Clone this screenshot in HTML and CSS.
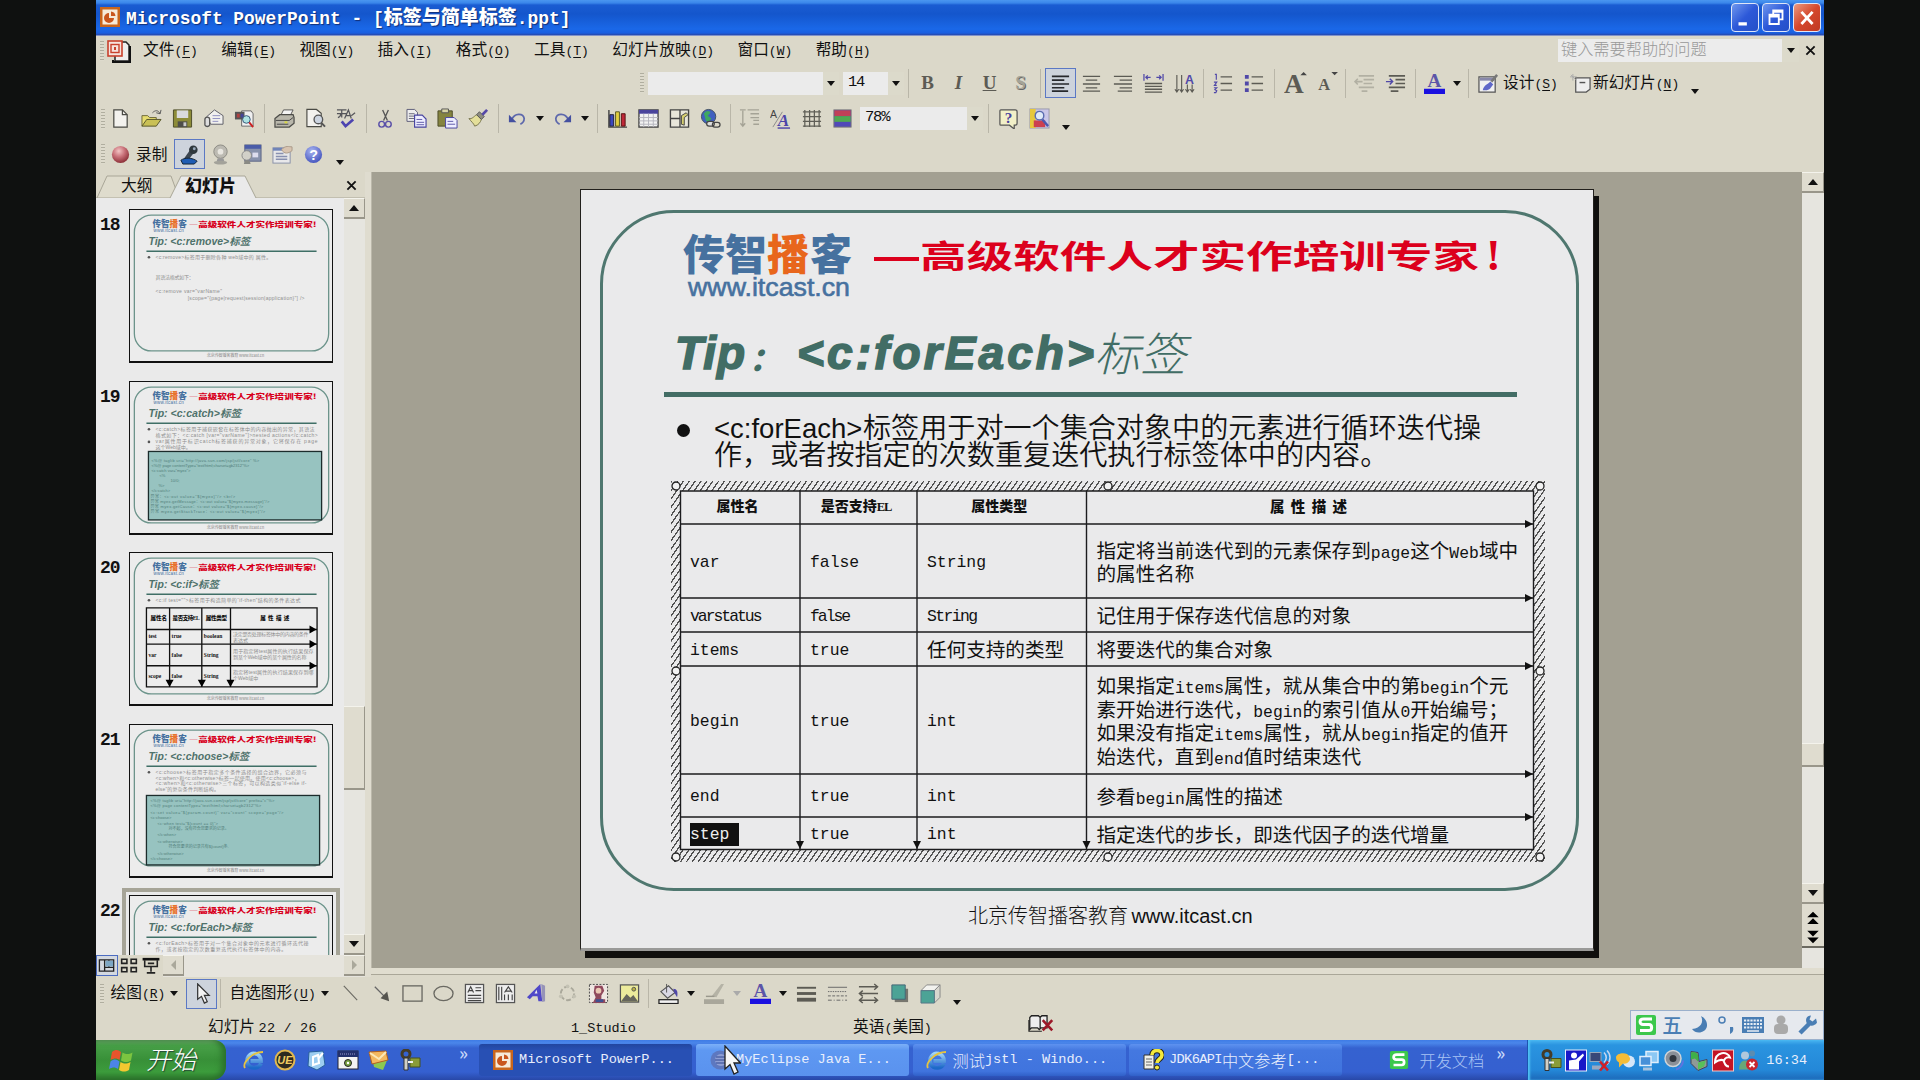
FILE: index.html
```html
<!DOCTYPE html>
<html lang="zh-CN">
<head>
<meta charset="utf-8">
<title>Microsoft PowerPoint - [标签与简单标签.ppt]</title>
<link rel="stylesheet" href="styles.css">
</head>
<body>
<svg class="defs" width="0" height="0">
  <defs>
    <linearGradient id="gBlue" x1="0" y1="0" x2="0" y2="1"><stop offset="0" stop-color="#9fd4f8"/><stop offset="1" stop-color="#1c68c8"/></linearGradient>
    <radialGradient id="gRed" cx=".4" cy=".3" r=".7"><stop offset="0" stop-color="#f3c4c4"/><stop offset=".5" stop-color="#c87078"/><stop offset="1" stop-color="#8c3038"/></radialGradient>
    <radialGradient id="gHelp" cx=".4" cy=".3" r=".7"><stop offset="0" stop-color="#a8b4f0"/><stop offset="1" stop-color="#4858c0"/></radialGradient>

    <symbol id="ppt" viewBox="0 0 22 22"><rect x="1" y="1" width="20" height="20" fill="#c9661c"/><rect x="3.5" y="3.5" width="15" height="15" fill="#f6ead8"/><path d="M10 7a5 5 0 1 0 5 5h-5z" fill="#c9561c"/><path d="M12 5.5a5 5 0 0 1 4.5 4.5H12z" fill="#c9561c"/></symbol>
    <symbol id="pptdoc" viewBox="0 0 24 24"><path d="M8 3h11l3 3v16H8z" fill="#eee" stroke="#222" stroke-width="1.5"/><path d="M6 21v2h17V7" fill="none" stroke="#111" stroke-width="2"/><rect x="1" y="2" width="14" height="15" fill="#f6e2dc" stroke="#c8402c" stroke-width="1.6"/><rect x="4" y="5.500" width="8" height="8" fill="none" stroke="#c8402c" stroke-width="1.4"/><path d="M7 8h2v3H7z" fill="#c8402c"/></symbol>
    <symbol id="new" viewBox="0 0 22 22"><path d="M4 2h9l5 5v13H4z" fill="#f3f2ee" stroke="#4a4a44" stroke-width="1.3"/><path d="M13 2v5h5" fill="none" stroke="#4a4a44" stroke-width="1.3"/></symbol>
    <symbol id="open" viewBox="0 0 22 22"><path d="M1 19V8h6l2 2h7v3" fill="#e6dc70" stroke="#6c6838"/><path d="M1 19l5-7h15l-5 7z" fill="#c9c055" stroke="#55552c"/><path d="M12 5c3-3 6-3 8 1m0 0l1-4m-1 4l-4-1" fill="none" stroke="#555"/></symbol>
    <symbol id="save" viewBox="0 0 22 22"><path d="M1.500 2h19v18h-19z" fill="#8d8c38" stroke="#4c4c28"/><path d="M5 2.500h12v8H5z" fill="#d9dadd"/><path d="M6 14h10v6H6z" fill="#4e4e4a"/><path d="M12 15h3v4h-3z" fill="#ccc"/></symbol>
    <symbol id="perm" viewBox="0 0 22 22"><path d="M4 9l8-7 9 6v9H8z" fill="#f1f0ee" stroke="#5c5c66"/><path d="M10 8h8M10 11h8M10 14h6" stroke="#9090c0"/><path d="M2 18v-6a2 2 0 0 1 5 0v6a3 3 0 0 1-5 0" fill="#ddd" stroke="#555" stroke-width="1.4"/></symbol>
    <symbol id="research" viewBox="0 0 22 22"><path d="M8 3h10l2 3v13H8z" fill="#f0f0f0" stroke="#666"/><path d="M1 4h10v8H1z" fill="#555"/><path d="M3 6h3v4H3z" fill="#b04040"/><path d="M7 6h3v4H7z" fill="#449"/><circle cx="13" cy="12" r="4" fill="#aee3e3" stroke="#357"/><path d="M16 15l4 5" stroke="#c22" stroke-width="2"/></symbol>
    <symbol id="print" viewBox="0 0 22 22"><path d="M7 8l3-6h10l-3 6" fill="#f4f4f4" stroke="#555"/><path d="M1 11l5-4h14l1 3v6l-5 4H1z" fill="#b9b7ab" stroke="#4c4c48" stroke-width="1.3"/><path d="M2 13h14l4-3M3 17h12" fill="none" stroke="#444"/><path d="M11 15h3" stroke="#d8d840" stroke-width="2"/></symbol>
    <symbol id="preview" viewBox="0 0 22 22"><path d="M2 1.500h10l5 4v14H2z" fill="#f3f2ee" stroke="#4a4a44" stroke-width="1.2"/><circle cx="14" cy="12" r="4.500" fill="#cdd5e0" stroke="#555" stroke-width="1.4"/><path d="M17 15.500l4 4" stroke="#555" stroke-width="2"/></symbol>
    <symbol id="spell" viewBox="0 0 22 22"><path d="M1 2h10M1 6h10M6 2v8M2 10c3-1 3-3 3-4M9 11l4-9 3 9M10.500 8h5M16 8l4-3" fill="none" stroke="#55555a" stroke-width="1.300"/><path d="M6 14l4 5 8-7" fill="none" stroke="#4c44b0" stroke-width="2.800"/></symbol>
    <symbol id="cut" viewBox="0 0 22 22"><path d="M8 2l5 11M14 2L9 13" stroke="#555" stroke-width="1.400"/><circle cx="7" cy="17" r="3" fill="none" stroke="#5a50a8" stroke-width="1.500"/><circle cx="14" cy="17" r="3" fill="none" stroke="#5a50a8" stroke-width="1.500"/></symbol>
    <symbol id="copy" viewBox="0 0 22 22"><path d="M1 1.500h8l3 3V14H1z" fill="#eee" stroke="#5c5c78"/><path d="M3 6h6M3 8.500h6M3 11h6" stroke="#667"/><path d="M9 7.500h8l4 4V20H9z" fill="#eef" stroke="#4844a0" stroke-width="1.200"/><path d="M11 12h6M11 15h8M11 17.500h8" stroke="#5c58a8"/></symbol>
    <symbol id="paste" viewBox="0 0 22 22"><path d="M1 3h15v16H1z" fill="#858440" stroke="#4c4c28"/><path d="M5 1h7v4H5z" fill="#d8d4a8" stroke="#555"/><path d="M9 10h9l3 3v8H9z" fill="#eef" stroke="#4844a0"/><path d="M11 14h6M11 17h8" stroke="#5c58a8"/></symbol>
    <symbol id="brush" viewBox="0 0 22 22"><path d="M1 11c3 1 5-2 8-4l5 5c-1 3-3 6-7 7-1-3-4-5-6-8z" fill="#e4df9a" stroke="#77744c"/><path d="M9 7l5 5 3-3-5-5z" fill="#8e8d80" stroke="#555"/><path d="M14 6l5-5 2 2-5 5z" fill="#5548a8"/></symbol>
    <symbol id="undo" viewBox="0 0 22 22"><path d="M5 12c3-7 12-7 13-1 0 3-2 5-4 6" fill="none" stroke="#5d68ac" stroke-width="1.800"/><path d="M2 7v8h8z" fill="#4450a0"/></symbol>
    <symbol id="redo" viewBox="0 0 22 22"><path d="M17 12C14 5 5 5 4 11c0 3 2 5 4 6" fill="none" stroke="#5d68ac" stroke-width="1.800"/><path d="M20 7v8h-8z" fill="#4450a0"/></symbol>
    <symbol id="chart" viewBox="0 0 22 22"><path d="M2 2v18h19" fill="none" stroke="#444" stroke-width="1.500"/><path d="M3 7h4v12H3z" fill="#3c48c0" stroke="#223"/><path d="M9 4h4v15H9z" fill="#e3d040" stroke="#552"/><path d="M15 6h4v13h-4z" fill="#c02838" stroke="#511"/></symbol>
    <symbol id="tbl" viewBox="0 0 22 22"><rect x="1" y="2" width="20" height="18" fill="#f2f2f2" stroke="#444" stroke-width="1.400"/><path d="M1 2h20v4H1z" fill="#4a449c"/><path d="M1 10h20M1 13.500h20M1 17h20M6 6v14M11 6v14M16 6v14" stroke="#b5b5bd"/></symbol>
    <symbol id="tbb" viewBox="0 0 22 22"><path d="M1.500 2h19v18h-19zM1.500 11h10M11.500 2v18" fill="#e8e6da" stroke="#444" stroke-width="1.400"/><path d="M13 17V8l5-3 2 2-4 3v8z" fill="#d6cf70" stroke="#444"/></symbol>
    <symbol id="link" viewBox="0 0 22 22"><circle cx="9" cy="9" r="7.500" fill="#4060c0" stroke="#405060"/><path d="M4 6c3-4 6-3 7-1l-3 3 4 3-3 4c-4-1-3-5-5-9z" fill="#3fa860"/><rect x="7" y="14" width="8" height="5" rx="2.500" fill="#ddd" stroke="#444" stroke-width="1.300"/><rect x="13" y="15" width="8" height="5" rx="2.500" fill="none" stroke="#444" stroke-width="1.300"/></symbol>
    <symbol id="expand" viewBox="0 0 22 22"><path d="M4 3v16M1.500 16L4 19l2.500-3M9 2h12M12 6h9M12 10h9M15 13h6M15 17h6M1 2h6" fill="none" stroke="#a5a396" stroke-width="1.400"/></symbol>
    <symbol id="showfmt" viewBox="0 0 22 22"><text x="0" y="10" font-family="Liberation Sans" font-size="11" fill="#444">A</text><path d="M3 20L13 4" stroke="#888"/><text x="8" y="19" font-family="Liberation Serif" font-size="18" font-weight="bold" font-style="italic" fill="#4c44a8">A</text><path d="M8 21h13" stroke="#4c44a8" stroke-width="1.500"/></symbol>
    <symbol id="grid" viewBox="0 0 22 22"><path d="M4 2v18M9 2v18M14 2v18M19 2v18M2 4h19M2 9h19M2 14h19M2 19h19" stroke="#5f5e56" stroke-width="1.300"/></symbol>
    <symbol id="color" viewBox="0 0 22 22"><rect x="2" y="2" width="18" height="18" fill="#5048b8" stroke="#777"/><path d="M2.500 2.500h17v6h-17z" fill="#c04058"/><path d="M2.500 8.500h17v6h-17z" fill="#50a850"/></symbol>
    <symbol id="ask" viewBox="0 0 22 22"><path d="M3 2h15a2 2 0 0 1 2 2v12a2 2 0 0 1-2 2h-1v4l-5-4H3a1 1 0 0 1-1-1V3a1 1 0 0 1 1-1z" fill="#f2f0c8" stroke="#555" stroke-width="1.300"/><text x="11" y="16" text-anchor="middle" font-family="Liberation Serif" font-size="16" font-weight="bold" fill="#473f9c">?</text></symbol>
    <symbol id="look" viewBox="0 0 22 22"><rect x="1" y="1" width="20" height="20" fill="#c9c6e8" stroke="#99a"/><path d="M1 1h6v20H1z" fill="#e6c83c"/><path d="M5 13h12v7H5z" fill="#cc4050"/><circle cx="11" cy="8" r="4.500" fill="#dfeaf8" stroke="#5a6cb0" stroke-width="1.500"/><path d="M14 12l6 7" stroke="#4c58b0" stroke-width="2.500"/></symbol>
    <symbol id="al" viewBox="0 0 22 22"><path d="M2 3.500h18M2 7.500h13M2 11.500h18M2 15.500h13M2 19h17" stroke="#26282c" stroke-width="1.700"/></symbol>
    <symbol id="ac" viewBox="0 0 22 22"><path d="M2 3.500h18M5 7.500h12M2 11.500h18M5 15.500h12M2 19h18" stroke="#5c5b54" stroke-width="1.400"/></symbol>
    <symbol id="ar" viewBox="0 0 22 22"><path d="M2 3.500h19M8 7.500h13M2 11.500h19M8 15.500h13M6 19h15" stroke="#5c5b54" stroke-width="1.400"/></symbol>
    <symbol id="dist" viewBox="0 0 22 22"><path d="M1 1v7M21 1v7M3 4.500h5M14 4.500h5M5 2.500L3 4.500l2 2M17 2.500l2 2-2 2" fill="none" stroke="#5048a8" stroke-width="1.300"/><path d="M2 11h18M2 14h18M2 17h18M2 20h18" stroke="#5c5b54" stroke-width="1.500"/></symbol>
    <symbol id="vert" viewBox="0 0 22 22"><path d="M3 2v18M8 2v18M14 12v8M19 12v8M1 17l2 3 2-3M6 17l2 3 2-3M12 17l2 3 2-3M17 17l2 3 2-3" fill="none" stroke="#5c5b54" stroke-width="1.200"/><text x="11.500" y="11" font-family="Liberation Sans" font-size="13" font-weight="bold" fill="#5048a8">A</text></symbol>
    <symbol id="num" viewBox="0 0 22 22"><path d="M9 4h12M9 11h12M9 18h12" stroke="#5c5b54" stroke-width="1.400"/><path d="M3 1.500h1.500V7M2 9.500h3L2.500 13H5M2 15.500h3l-2 2 2 1-1 2H2" fill="none" stroke="#5048a8" stroke-width="1.200"/></symbol>
    <symbol id="bul" viewBox="0 0 22 22"><path d="M9 4h12M9 11h12M9 18h12" stroke="#5c5b54" stroke-width="1.400"/><path d="M2 2h4v4H2zM2 9h4v4H2zM2 16h4v4H2z" fill="#5048a8"/></symbol>
    <symbol id="grow" viewBox="0 0 22 22"><text x="0" y="20" font-family="Liberation Serif" font-size="25" font-weight="bold" fill="#5c5b54">A</text><path d="M15 4l3-3 3 3z" fill="#444"/></symbol>
    <symbol id="shrink" viewBox="0 0 22 22"><text x="3" y="17" font-family="Liberation Serif" font-size="15" font-weight="bold" fill="#5c5b54">A</text><path d="M15 1h6l-3 3z" fill="#444"/></symbol>
    <symbol id="out" viewBox="0 0 22 22"><path d="M5 3h16M10 7h11M10 11h9M5 15h16M8 19h6M1 9h8M4 6L1 9l3 3" fill="none" stroke="#b2b0a3" stroke-width="1.700"/></symbol>
    <symbol id="ind" viewBox="0 0 22 22"><path d="M4 3h17M11 7h10M11 11h10M4 15h17M6 19h8" stroke="#5c5b54" stroke-width="1.800"/><path d="M1 9h7M5 6l3 3-3 3" fill="none" stroke="#5048a8" stroke-width="1.500"/></symbol>
    <symbol id="fcol" viewBox="0 0 22 22"><text x="11" y="15" text-anchor="middle" font-family="Liberation Serif" font-size="20" font-weight="bold" fill="#5c55a8">A</text><path d="M0 16.500h22V22H0z" fill="#1a10e0"/></symbol>
    <symbol id="design" viewBox="0 0 22 22"><path d="M1 4h17v16H1z" fill="#f1f1f1" stroke="#555" stroke-width="1.300"/><path d="M2 5h15v3H2z" fill="#88a"/><path d="M5 18c1-5 5-6 8-9l3 3c-3 3-3 7-11 6z" fill="#6068c8"/><path d="M13 8l6-7 2 2-6 7z" fill="#777"/></symbol>
    <symbol id="newslide" viewBox="0 0 22 22"><path d="M6 5h15v12l-4 3H6z" fill="#eee" stroke="#555" stroke-width="1.300"/><path d="M10 10h6" stroke="#555" stroke-width="1.500"/><path d="M3 1v7M0 4h7M1 2l5 5" stroke="#aaa"/></symbol>
    <symbol id="recdot" viewBox="0 0 22 22"><circle cx="11" cy="11" r="9" fill="url(#gRed)"/></symbol>
    <symbol id="mic" viewBox="0 0 22 22"><path d="M4 17l7-10 4 3-7 9z" fill="#3c4650"/><circle cx="15" cy="6" r="4.500" fill="#2f383e"/><circle cx="16" cy="5" r="1.500" fill="#9ab"/><path d="M2 17c4-3 12-3 17 1l-3 3H4z" fill="#1e5cb4" stroke="#123"/></symbol>
    <symbol id="cam" viewBox="0 0 22 22"><circle cx="11" cy="8" r="7" fill="#bcbab2" stroke="#8a8982"/><circle cx="11" cy="8" r="3" fill="#e8e6e0"/><path d="M8 15h6l1 3H7z" fill="#999"/><ellipse cx="11" cy="19.500" rx="7" ry="2" fill="#a3a29a"/></symbol>
    <symbol id="camwin" viewBox="0 0 22 22"><rect x="4" y="1" width="17" height="17" fill="#8892ac" stroke="#5c6484"/><path d="M4 1h17v4H4z" fill="#4a5ca8"/><circle cx="6" cy="12" r="5" fill="#d2d0c8" stroke="#888"/><path d="M4 17h5l1 4H3z" fill="#8a8a84"/><path d="M12 9h6v5h-6z" fill="#dde"/></symbol>
    <symbol id="opts" viewBox="0 0 22 22"><rect x="1" y="4" width="18" height="16" fill="#e8e8ea" stroke="#8890a8"/><path d="M1 4h10v3H1z" fill="#7084b8"/><path d="M4 10h8M4 13h12M4 16h12" stroke="#8890b0" stroke-width="1.500"/><path d="M10 6c4-5 8-3 11-3v4c-4 3-8 4-11-1z" fill="#d8c4b0" stroke="#a98"/></symbol>
    <symbol id="help" viewBox="0 0 22 22"><circle cx="11" cy="11" r="9" fill="url(#gHelp)"/><text x="11" y="16.500" text-anchor="middle" font-family="Liberation Sans" font-size="15" font-weight="bold" fill="#fff">?</text></symbol>
    <symbol id="ptr" viewBox="0 0 22 22"><path d="M7 1v16l4-3 3 7 3-1.500-3-6.500h5z" fill="#f3f3f3" stroke="#333" stroke-width="1.300"/></symbol>
    <symbol id="ln" viewBox="0 0 22 22"><path d="M4 3l14 15" stroke="#6a6962" stroke-width="1.200"/></symbol>
    <symbol id="arw" viewBox="0 0 22 22"><path d="M4 4l10 10" stroke="#666" stroke-width="1.400"/><path d="M19 19l-2-10-7 7z" fill="#55544e"/></symbol>
    <symbol id="rect" viewBox="0 0 22 22"><rect x="1" y="3" width="20" height="16" fill="none" stroke="#6a6962" stroke-width="1.400"/></symbol>
    <symbol id="oval" viewBox="0 0 22 22"><ellipse cx="11" cy="11" rx="10" ry="7.500" fill="none" stroke="#6a6962" stroke-width="1.400"/></symbol>
    <symbol id="tbox" viewBox="0 0 22 22"><rect x="1.500" y="1.500" width="19" height="19" fill="#eee" stroke="#555" stroke-width="1.300"/><path d="M4 10l3-6 3 6M5 8h4M12 5h6M12 8h6M4 13h14M4 16h14M4 18.500h14" fill="none" stroke="#444" stroke-width="1.200"/></symbol>
    <symbol id="vtbox" viewBox="0 0 22 22"><rect x="1.500" y="1.500" width="19" height="19" fill="#eee" stroke="#555" stroke-width="1.300"/><path d="M4 4v14M7 4v14M10 12v6M14 12v6M18 12v6M10 10l4-6 4 6M11 8.500h6" fill="none" stroke="#444" stroke-width="1.200"/></symbol>
    <symbol id="wart" viewBox="0 0 22 22"><path d="M1 15L15 1l2 18h-4l-1-5H7l-3 3z" fill="#5048c8"/><path d="M9 11h3l-1-4z" fill="#eee"/><path d="M16 1l4 2v16l-3 1z" fill="#9693b8"/></symbol>
    <symbol id="diag" viewBox="0 0 22 22"><circle cx="11" cy="11" r="7" fill="none" stroke="#aaa89b" stroke-width="2" stroke-dasharray="5 2.300"/><circle cx="11" cy="3.500" r="2" fill="#c4c2b4"/><circle cx="4" cy="14" r="2" fill="#c4c2b4"/><circle cx="18" cy="14" r="2" fill="#c4c2b4"/></symbol>
    <symbol id="clip" viewBox="0 0 22 22"><rect x="1.500" y="1.500" width="19" height="19" fill="#efe6e2" stroke="#444" stroke-dasharray="2 1.500"/><path d="M7 3h8l2 5-3 5v4h4v4H5l3-6-2-5z" fill="#90485c"/><circle cx="11" cy="8" r="3" fill="#ebc8b4"/><path d="M8 17h8v3H8z" fill="#405090"/></symbol>
    <symbol id="pic" viewBox="0 0 22 22"><rect x="1.500" y="2" width="19" height="18" fill="#eceb9c" stroke="#555" stroke-width="1.300"/><path d="M2 19.500l6-8 4 4 3-3 5 7z" fill="#66665c"/><circle cx="15.500" cy="6.500" r="2" fill="#b8b040" stroke="#555"/></symbol>
    <symbol id="fill" viewBox="0 0 22 22"><path d="M3 9l8-6 7 7-8 6z" fill="#dad9e4" stroke="#555" stroke-width="1.200"/><path d="M9 1v9" stroke="#555"/><path d="M16 6c4 0 5 3 4 9l-3-5z" fill="#5048a8"/><rect x="1" y="17.500" width="20" height="4" fill="#f2f2f2" stroke="#222" stroke-width="1.300"/></symbol>
    <symbol id="pen" viewBox="0 0 22 22"><path d="M8 14L18 1h3l-8 14z" fill="#b5b3a6"/><path d="M2 14h9" stroke="#9a988c" stroke-width="1.500"/><path d="M0 17h21v5H0z" fill="#a9a79b"/></symbol>
    <symbol id="lw" viewBox="0 0 22 22"><path d="M1 5h20" stroke="#5c5b54" stroke-width="2"/><path d="M1 11h20" stroke="#5c5b54" stroke-width="3"/><path d="M1 17.500h20" stroke="#5c5b54" stroke-width="4"/></symbol>
    <symbol id="dash" viewBox="0 0 22 22"><path d="M1 4.500h20" stroke="#666"/><path d="M1 9h20" stroke="#666" stroke-dasharray="1.500 1"/><path d="M1 13.500h20" stroke="#666" stroke-dasharray="3 1.500"/><path d="M1 18h20" stroke="#666" stroke-dasharray="4 2 1 2"/></symbol>
    <symbol id="arst" viewBox="0 0 22 22"><path d="M1 4h19M2 11h19M1 18h19M17 1l3.500 3-3.500 3M5 8l-3.500 3L5 14M17 15l3.500 3-3.500 3M5 15l-3.500 3L5 21" fill="none" stroke="#5c5b54" stroke-width="1.500"/></symbol>
    <symbol id="shad" viewBox="0 0 22 22"><path d="M6 6h14v14H6z" fill="#77766e"/><path d="M3 2h14v15H3z" fill="#4ca396" stroke="#467"/></symbol>
    <symbol id="threed" viewBox="0 0 22 22"><path d="M1 8l6-6h14l-6 6z" fill="#f2f2ee" stroke="#888"/><path d="M15 8l6-6v13l-6 6z" fill="#d8d7cf" stroke="#888"/><path d="M1 8h14v13H1z" fill="#4ca396" stroke="#578"/></symbol>
    <symbol id="ie" viewBox="0 0 22 22"><path d="M18 14.500c-2 5-10 6-13 1-3-6 2-12 7-11 4 .6 6 4 6 7.500H7.500" fill="none" stroke="url(#gBlue)" stroke-width="3.800"/><path d="M2 19C-1 14 9 3 20 3" fill="none" stroke="#e6c440" stroke-width="1.800"/></symbol>
    <symbol id="ue" viewBox="0 0 22 22"><circle cx="11" cy="11" r="9.500" fill="#2c2a20" stroke="#e0b850" stroke-width="2"/><text x="11" y="15" text-anchor="middle" font-family="Liberation Sans" font-size="11" font-weight="bold" font-style="italic" fill="#f0cc60">UE</text></symbol>
    <symbol id="note" viewBox="0 0 22 22"><path d="M4 3l14-1 2 14-8 5-9-4z" fill="#9ccdf0" stroke="#28609c"/><path d="M8 8l5-2 1 8-6 2zM13 10l5-6" stroke="#fff" stroke-width="2" fill="none"/></symbol>
    <symbol id="cmd" viewBox="0 0 22 22"><rect x="1" y="2" width="20" height="18" fill="#f3f3f3" stroke="#223"/><path d="M1 2h20v6H1z" fill="#22306c"/><path d="M3 5h16" stroke="#99c" stroke-dasharray="1 1"/><circle cx="11" cy="14" r="3.500" fill="#78a040" stroke="#222"/><circle cx="11" cy="14" r="1.200" fill="#fff"/></symbol>
    <symbol id="mailq" viewBox="0 0 22 22"><path d="M4 7l16 2-5 12-9-3z" fill="#8cc850"/><path d="M1 3l17-1 2 9-16 4z" fill="#f3b860" stroke="#b06020"/><path d="M2 4l9 6 7-7" fill="none" stroke="#fbe8b8" stroke-width="2"/></symbol>
    <symbol id="key" viewBox="0 0 22 22"><circle cx="7" cy="5" r="4" fill="none" stroke="#443c28" stroke-width="3"/><path d="M5 9h4v12H5z" fill="#d0d0c8" stroke="#333"/><path d="M11 9h10v9H11z" fill="#8a9c38" stroke="#46501c"/><path d="M9 13h5" stroke="#eee" stroke-width="2"/></symbol>
    <symbol id="ecl" viewBox="0 0 22 22"><circle cx="11" cy="11" r="9.500" fill="#5d78c0"/><circle cx="12" cy="11" r="6" fill="#8f9fd4"/><path d="M6 11h12M7 8h10M7 14h10" stroke="#5066a8" stroke-width="1.500"/></symbol>
    <symbol id="chm" viewBox="0 0 22 22"><path d="M2 6h10v14H2z" fill="#f0f0e8" stroke="#333"/><path d="M4 10h6M4 13h6M4 16h6" stroke="#666"/><path d="M10 6c0-6 10-6 10 0 0 4-5 4-5 8" fill="none" stroke="#222" stroke-width="5.500"/><path d="M10 6c0-6 10-6 10 0 0 4-5 4-5 8" fill="none" stroke="#f4e93c" stroke-width="3.600"/><circle cx="15" cy="18.500" r="2.500" fill="#f4e93c" stroke="#222"/></symbol>
    <symbol id="sogou" viewBox="0 0 22 22"><rect x="1" y="1" width="20" height="20" rx="2" fill="#3cc84c"/><path d="M17 5H8.500C4 5 4 10.500 8 10.500h6c3.500 0 3.500 6 0 6H5" fill="none" stroke="#fff" stroke-width="3"/></symbol>
    <symbol id="person" viewBox="0 0 22 22"><rect width="22" height="22" fill="#e8eefc"/><rect x="1" y="1" width="20" height="20" fill="#1818c8"/><circle cx="9" cy="6" r="3" fill="#fff"/><path d="M4 20V11l7-1 7-6 1 2-5 6v8z" fill="#fff"/></symbol>
    <symbol id="netx" viewBox="0 0 22 22"><rect x="1" y="3" width="11" height="9" fill="#384878" stroke="#9ab"/><path d="M3 16h9v4H3z" fill="#98a8c0"/><path d="M15 3c3 3 3 7 0 10M18 1c4 4 4 10 0 14" fill="none" stroke="#c8d8f0" stroke-width="1.500"/><path d="M11 12l8 9M19 12l-8 9" stroke="#d02028" stroke-width="2.600"/></symbol>
    <symbol id="cloud" viewBox="0 0 22 22"><circle cx="15" cy="12" r="6" fill="#d4e6f8"/><path d="M2 8c0-5 12-6 13-1 3 3-1 8-6 7l-4 4v-5c-2-1-3-3-3-5z" fill="#f5bd38"/></symbol>
    <symbol id="pcs" viewBox="0 0 22 22"><rect x="8" y="2" width="12" height="11" fill="#8cc8f4" stroke="#e0eefc" stroke-width="1.500"/><rect x="2" y="7" width="11" height="9" fill="#4890d8" stroke="#e0eefc" stroke-width="1.500"/><path d="M5 18h9v3H5z" fill="#a9c3de"/></symbol>
    <symbol id="spk" viewBox="0 0 22 22"><circle cx="10" cy="9" r="8" fill="#8a9098" stroke="#d0d4d8" stroke-width="1.500"/><circle cx="10" cy="9" r="3.500" fill="#30363e"/><path d="M13 20c4-1 7-5 7-9" fill="none" stroke="#5c74e0" stroke-width="2"/></symbol>
    <symbol id="safe" viewBox="0 0 22 22"><path d="M3 2l7 1 1 9 8-2v7l-9 4-7-7z" fill="#8f9a98" stroke="#445"/><path d="M3 3c5-2 9 2 7 9l-3-3-4 1z" fill="#40b048"/><path d="M10 13l8-2-2 6-6 3z" fill="#58c058"/></symbol>
    <symbol id="avira" viewBox="0 0 22 22"><rect x=".5" y=".5" width="21" height="21" fill="#c41424" stroke="#eac8cc"/><path d="M3 13C3 2 16 1 18 8c-4-1-5 1-6 3-2-1-5-1-9 2zM11 10c2 4 2 7 6 7" fill="none" stroke="#fff" stroke-width="2"/></symbol>
    <symbol id="msn" viewBox="0 0 22 22"><circle cx="8" cy="6" r="4" fill="#b0c8dc"/><path d="M2 20c0-12 12-12 12 0z" fill="#68a878"/><circle cx="15" cy="4" r="3" fill="#5c8cb0"/><circle cx="15" cy="15" r="6" fill="#c82830"/><path d="M12.500 12.500l5 5M17.500 12.500l-5 5" stroke="#fff" stroke-width="1.800"/></symbol>
    <symbol id="book" viewBox="0 0 30 22"><path d="M2 4l2-2h8l2 2 2-2h6v14h-7l-2 2-2-2H4l-2 2zM14 4v13" fill="#eee" stroke="#222" stroke-width="1.500"/><path d="M1 7v13h15" fill="none" stroke="#222" stroke-width="1.300"/><path d="M17 7l11 12M28 7L17 19" stroke="#9c1828" stroke-width="3"/></symbol>

    <symbol id="thumbhead" viewBox="0 0 200 150">
      <rect x="4" y="5" width="193" height="135" rx="17" fill="none" stroke="#6c948b" stroke-width="1.300"/>
      <g font-family="Noto Sans CJK SC" font-weight="900" font-size="8.500" fill="#46719f">
        <text x="22" y="17">传智</text><text x="39" y="17" fill="#e8722c">播</text><text x="47.500" y="17">客</text>
      </g>
      <text x="23" y="22" font-family="Liberation Sans" font-size="4.500" fill="#46719f" textLength="30">www.itcast.cn</text>
      <text x="58" y="17" font-family="Noto Sans CJK SC" font-weight="900" font-size="7" fill="#d8001c" textLength="127" lengthAdjust="spacingAndGlyphs">—高级软件人才实作培训专家!</text>
      <path d="M16 41h169" stroke="#3f6f66" stroke-width="1.300"/>
      <text x="76" y="146" font-family="Noto Sans CJK SC" font-size="4" fill="#888" textLength="57">北京传智播客教育 www.itcast.cn</text>
    </symbol>
  </defs>
</svg>

<main class="app">
  <header class="titlebar">
    <svg class="ticon"><use href="#ppt"/></svg>
    <h1 class="wintitle"><span>Microsoft PowerPoint - [</span><b>标签与简单标签</b><span>.ppt]</span></h1>
    <div class="winbtns">
      <svg class="wb" viewBox="0 0 28 28"><path d="M7 19h9v3.500H7z" fill="#fff"/></svg>
      <svg class="wb" viewBox="0 0 28 28"><path d="M11 11V6.500h10V16h-3M7 11h10v10H7zM7 13h10M11 8h10" fill="none" stroke="#fff" stroke-width="2"/></svg>
      <svg class="wb close" viewBox="0 0 28 28"><path d="M8 8l12 13M20 8L8 21" stroke="#fff" stroke-width="3"/></svg>
    </div>
  </header>

  <nav class="menubar">
    <i class="grip"></i>
    <svg class="docicon"><use href="#pptdoc"/></svg>
    <span class="menu">文件<s>(<u>F</u>)</s></span><span class="menu">编辑<s>(<u>E</u>)</s></span><span class="menu">视图<s>(<u>V</u>)</s></span><span class="menu">插入<s>(<u>I</u>)</s></span><span class="menu">格式<s>(<u>O</u>)</s></span><span class="menu">工具<s>(<u>T</u>)</s></span><span class="menu">幻灯片放映<s>(<u>D</u>)</s></span><span class="menu">窗口<s>(<u>W</u>)</s></span><span class="menu">帮助<s>(<u>H</u>)</s></span>
    <div class="ask">键入需要帮助的问题<i class="dd"></i></div>
    <svg class="mx" viewBox="0 0 12 12"><path d="M1.500 1.500l9 9M10.500 1.500l-9 9" stroke="#111" stroke-width="2"/></svg>
  </nav>

  <div class="bar fmt">
    <i class="grip"></i>
    <div class="combo fontname"><i class="dd"></i></div>
    <div class="combo fontsize">14<i class="dd"></i></div>
    <i class="sep"></i>
    <span class="ch b">B</span><span class="ch it">I</span><span class="ch un">U</span><span class="ch sh">S</span>
    <i class="sep w9"></i>
    <span class="ic on"><svg><use href="#al"/></svg></span><span class="ic"><svg><use href="#ac"/></svg></span><span class="ic"><svg><use href="#ar"/></svg></span><span class="ic"><svg><use href="#dist"/></svg></span><span class="ic"><svg><use href="#vert"/></svg></span>
    <i class="sep w7"></i>
    <span class="ic"><svg><use href="#num"/></svg></span><span class="ic"><svg><use href="#bul"/></svg></span>
    <i class="sep w10"></i>
    <span class="ic big"><svg><use href="#grow"/></svg></span><span class="ic big"><svg><use href="#shrink"/></svg></span>
    <i class="sep"></i>
    <span class="ic"><svg><use href="#out"/></svg></span><span class="ic"><svg><use href="#ind"/></svg></span>
    <i class="sep"></i>
    <span class="ic"><svg><use href="#fcol"/></svg></span><i class="dd"></i>
    <i class="sep w10"></i>
    <span class="ic"><svg><use href="#design"/></svg></span><span class="lbl design">设计<s>(<u>S</u>)</s></span>
    <span class="ic ns"><svg><use href="#newslide"/></svg></span><span class="lbl">新幻灯片<s>(<u>N</u>)</s></span><i class="dd low"></i>
  </div>

  <div class="bar std">
    <i class="grip"></i>
    <span class="ic"><svg><use href="#new"/></svg></span><span class="ic"><svg><use href="#open"/></svg></span><span class="ic"><svg><use href="#save"/></svg></span><span class="ic"><svg><use href="#perm"/></svg></span><span class="ic"><svg><use href="#research"/></svg></span>
    <i class="sep w9"></i>
    <span class="ic"><svg><use href="#print"/></svg></span><span class="ic"><svg><use href="#preview"/></svg></span><span class="ic"><svg><use href="#spell"/></svg></span>
    <i class="sep"></i>
    <span class="ic"><svg><use href="#cut"/></svg></span><span class="ic"><svg><use href="#copy"/></svg></span><span class="ic"><svg><use href="#paste"/></svg></span><span class="ic"><svg><use href="#brush"/></svg></span>
    <i class="sep"></i>
    <span class="ic"><svg><use href="#undo"/></svg></span><i class="dd w14"></i><span class="ic"><svg><use href="#redo"/></svg></span><i class="dd w14"></i>
    <i class="sep w10"></i>
    <span class="ic"><svg><use href="#chart"/></svg></span><span class="ic"><svg><use href="#tbl"/></svg></span><span class="ic"><svg><use href="#tbb"/></svg></span><span class="ic"><svg><use href="#link"/></svg></span>
    <i class="sep"></i>
    <span class="ic"><svg><use href="#expand"/></svg></span><span class="ic"><svg><use href="#showfmt"/></svg></span><span class="ic"><svg><use href="#grid"/></svg></span><span class="ic"><svg><use href="#color"/></svg></span>
    <div class="combo zoom">78%<i class="dd"></i></div>
    <i class="sep w10"></i>
    <span class="ic"><svg><use href="#ask"/></svg></span><span class="ic"><svg><use href="#look"/></svg></span><i class="dd low"></i>
  </div>

  <div class="bar rec">
    <i class="grip"></i>
    <span class="ic"><svg><use href="#recdot"/></svg></span><span class="lbl reclbl">录制</span>
    <span class="ic on"><svg><use href="#mic"/></svg></span><span class="ic"><svg><use href="#cam"/></svg></span><span class="ic"><svg><use href="#camwin"/></svg></span><span class="ic"><svg><use href="#opts"/></svg></span><span class="ic"><svg><use href="#help"/></svg></span><i class="dd low"></i>
  </div>

  <section class="work">
    <aside class="pane">
      <div class="tabs">
        <svg class="tabshape" viewBox="0 0 269 26"><path d="M1 26L11 4h64l8 22" fill="#dfdccd" stroke="#a9a697"/><path d="M0 26h74L85 4h64l11 22h109" fill="#eaeaea" stroke="#a9a697"/><path d="M75 26h84" stroke="#eaeaea" stroke-width="2"/></svg>
        <span class="tab">大纲</span><span class="tab act">幻灯片</span>
        <svg class="px" viewBox="0 0 12 12"><path d="M1.500 1.500l9 9M10.500 1.500l-9 9" stroke="#111" stroke-width="2"/></svg>
      </div>
      <div class="listrow">
        <div class="list">
          <div class="item"><span class="no">18</span><svg class="thumb" viewBox="0 0 200 150"><use href="#thumbhead"/>
            <text class="tt" x="18" y="35" textLength="101" lengthAdjust="spacingAndGlyphs">Tip: &lt;c:remove&gt;标签</text>
            <circle class="dot" cx="18.500" cy="47" r="1.300"/><text class="tb" x="25" y="49" textLength="115">&lt;c:remove&gt;标签用于删除各种 web域中的 属性。</text>
            <text class="tb" x="25" y="69" textLength="38">其语法格式如下：</text><text class="tb" x="25" y="82" textLength="66">&lt;c:remove var="varName"</text><text class="tb" x="57" y="89" textLength="116">[scope="{page|request|session|application}"] /&gt;</text></svg></div>
          <div class="item"><span class="no">19</span><svg class="thumb" viewBox="0 0 200 150"><use href="#thumbhead"/>
            <text class="tt" x="18" y="35" textLength="92" lengthAdjust="spacingAndGlyphs">Tip: &lt;c:catch&gt;标签</text>
            <circle class="dot" cx="18.500" cy="47" r="1.300"/><text class="tb" x="25" y="49" textLength="158">&lt;c:catch&gt;标签用于捕获嵌套在标签体中的内容抛出的异常，其语法</text><text class="tb" x="25" y="54.500" textLength="161">格式如下：&lt;c:catch [var="varName"]&gt;nested actions&lt;/c:catch&gt;</text>
            <circle class="dot" cx="18.500" cy="59.500" r="1.300"/><text class="tb" x="25" y="61" textLength="161">var属性用于标识catch标签捕获的异常对象，它将保存在 page</text><text class="tb" x="25" y="66.500">这个Web域中。</text>
            <rect x="18" y="69" width="172" height="68" fill="#97c3c0" stroke="#1c2c2c" stroke-width="1.300"/>
            <g class="tc"><text x="21" y="79" textLength="107">&lt;%@ taglib uri="http://java.sun.com/jsp/jstl/core" %&gt;</text><text x="21" y="84" textLength="97">&lt;%@ page contentType="text/html;charset=gb2312"%&gt;</text><text x="21" y="89">&lt;c:catch var="myex"&gt;</text><text x="29" y="94">&lt;%</text><text x="40" y="99">10/0;</text><text x="28" y="104">%&gt;</text><text x="21" y="109">&lt;/c:catch&gt;</text><text x="20" y="115" textLength="84">异常：&lt;c:out value="${myex}"/&gt; &lt;br/&gt;</text><text x="20" y="120" textLength="118">异常 myex.getMessage：&lt;c:out value="${myex.message}"/&gt;</text><text x="20" y="125" textLength="112">异常 myex.getCause：&lt;c:out value="${myex.cause}"/&gt;</text><text x="20" y="130" textLength="114">异常 myex.getStackTrace：&lt;c:out value="${myex}"/&gt;</text></g></svg></div>
          <div class="item"><span class="no">20</span><svg class="thumb" viewBox="0 0 200 150"><use href="#thumbhead"/>
            <text class="tt" x="18" y="35" textLength="70" lengthAdjust="spacingAndGlyphs">Tip: &lt;c:if&gt;标签</text>
            <circle class="dot" cx="18.500" cy="47" r="1.300"/><text class="tb" x="25" y="49" textLength="144">&lt;c:if test=""&gt;标签用于构造简单的“if-then”结构的条件表达式</text>
            <path d="M16 54.500h169.500v78.500H16zM16 76h169M16 90.500h169M16 112h169M39 54.500V133M71 54.500V133M99.500 54.500V133" fill="none" stroke="#111" stroke-width="1.300"/>
            <path d="M178 72l7 4-7 4zM178 86.500l7 4-7 4zM178 108l7 4-7 4zM35 126h8l-4 7zM67 126h8l-4 7zM95.500 126h8l-4 7z"/>
            <g class="th"><text x="20" y="67">属性名</text><text x="42" y="67" textLength="27">是否支持EL</text><text x="75" y="67" textLength="21">属性类型</text><text x="129" y="67" textLength="29">属 性 描 述</text><text x="18" y="84">test</text><text x="41" y="84">true</text><text x="73" y="84">boolean</text><text x="18" y="103">var</text><text x="41" y="103">false</text><text x="73" y="103">String</text><text x="18" y="124">scope</text><text x="41" y="124">false</text><text x="73" y="124">String</text></g>
            <g class="tb"><text x="102" y="82" textLength="75">决定是否处理标签体中的内容的条件</text><text x="102" y="88">表达式</text><text x="102" y="99" textLength="80">用于指定将test属性的执行结果保存</text><text x="102" y="105" textLength="73">到某个Web域中的某个属性的名称</text><text x="102" y="120" textLength="80">指定将test属性的执行结果保存到哪</text><text x="102" y="126">个Web域中</text></g></svg></div>
          <div class="item"><span class="no">21</span><svg class="thumb" viewBox="0 0 200 150"><use href="#thumbhead"/>
            <text class="tt" x="18" y="35" textLength="100" lengthAdjust="spacingAndGlyphs">Tip: &lt;c:choose&gt;标签</text>
            <circle class="dot" cx="18.500" cy="47" r="1.300"/><g class="tb"><text x="25" y="49" textLength="150">&lt;c:choose&gt;标签用于指定多个条件选择的组合边界，它必须与</text><text x="25" y="54.500" textLength="143">&lt;c:when&gt;和&lt;c:otherwise&gt;标签一起使用。使用&lt;c:choose&gt;，</text><text x="25" y="60" textLength="150">&lt;c:when&gt;和&lt;c:otherwise&gt;三个标签，可以构造类似“if-else if-</text><text x="25" y="65.500" textLength="63">else”的复杂条件判断结构。</text></g>
            <rect x="16" y="70" width="172" height="69" fill="#97c3c0" stroke="#1c2c2c" stroke-width="1.300"/>
            <g class="tc"><text x="20" y="76" textLength="123">&lt;%@ taglib uri="http://java.sun.com/jsp/jstl/core" prefix="c"%&gt;</text><text x="20" y="81" textLength="110">&lt;%@ page contentType="text/html;charset=gb2312"%&gt;</text><text x="20" y="88" textLength="132">&lt;c:set value="${param.count}" var="count" scope="page"/&gt;</text><text x="20" y="93">&lt;c:choose&gt;</text><text x="27" y="99" textLength="60">&lt;c:when test="${count == 0}"&gt;</text><text x="38" y="104">对不起，没有符合您要求的记录。</text><text x="27" y="110">&lt;/c:when&gt;</text><text x="27" y="117">&lt;c:otherwise&gt;</text><text x="38" y="122">符合您要求的记录共有${count}条.</text><text x="27" y="129">&lt;/c:otherwise&gt;</text><text x="20" y="134">&lt;/c:choose&gt;</text></g></svg></div>
          <div class="item sel"><span class="no">22</span><svg class="thumb" viewBox="0 0 200 150"><use href="#thumbhead"/>
            <text class="tt" x="18" y="35" textLength="103" lengthAdjust="spacingAndGlyphs">Tip: &lt;c:forEach&gt;标签</text>
            <circle class="dot" cx="18.500" cy="47" r="1.300"/><text class="tb" x="25" y="49" textLength="152">&lt;c:forEach&gt;标签用于对一个集合对象中的元素进行循环迭代操</text><text class="tb" x="25" y="54.500" textLength="130">作，或者按指定的次数重复迭代执行标签体中的内容。</text></svg></div>
        </div>
        <div class="vbar"><i class="sb up"></i><i class="knob"></i><i class="sb down"></i></div>
      </div>
      <div class="views">
        <svg class="v on" viewBox="0 0 20 20"><path d="M2 4h15v12H2zM7.500 4v12M7.500 12H17M12 4v8" fill="none" stroke="#222" stroke-width="1.400"/><path d="M8.500 5h8v6h-8z" fill="#7da7c4"/></svg>
        <svg class="v" viewBox="0 0 20 20"><path d="M3 4h5v4H3zM12 4h5v4h-5zM3 12h5v4H3zM12 12h5v4h-5z" fill="none" stroke="#222" stroke-width="1.500"/></svg>
        <svg class="v" viewBox="0 0 20 20"><path d="M2 4h16" stroke="#111" stroke-width="2.500"/><path d="M4 5v6h12V5M10 11v5M6 17h8M7 8h6" fill="none" stroke="#222" stroke-width="1.500"/></svg>
        <div class="hbar"><i class="sb left"></i><i class="sb right"></i></div>
      </div>
    </aside>

    <div class="center">
      <div class="stage">
        <article class="slide">
          <svg class="banner" viewBox="0 0 850 75">
            <g font-family="Noto Sans CJK SC" font-weight="900" font-size="42" fill="#46719f"><text x="8" y="41">传智</text><text x="92" y="41" fill="#e8661c">播</text><text x="135" y="41">客</text></g>
            <text x="13" y="67" font-family="Liberation Sans" font-size="26" fill="#46719f" stroke="#46719f" stroke-width=".6" textLength="162" lengthAdjust="spacingAndGlyphs">www.itcast.cn</text>
            <path d="M199 30h45" stroke="#dc001c" stroke-width="4"/>
            <g font-family="Noto Sans CJK SC" font-weight="700" font-size="32" fill="#dc001c"><text x="245" y="39" textLength="559" lengthAdjust="spacingAndGlyphs">高级软件人才实作培训专家</text><text x="811" y="41" font-family="Liberation Serif" font-size="44" font-weight="bold">!</text></g>
          </svg>
          <h2 class="stitle"><span class="tip">Tip</span><span class="col">：</span><span class="tag">&lt;c:forEach&gt;</span><span class="cn">标签</span></h2>
          <hr class="rule">
          <p class="lead"><span>&lt;c:forEach&gt;</span>标签用于对一个集合对象中的元素进行循环迭代操<br>作，或者按指定的次数重复迭代执行标签体中的内容。</p>
          <div class="tframe">
            <div class="tgrid">
              <b>属性名</b><b>是否支持<s>EL</s></b><b>属性类型</b><b class="sp">属 性 描 述</b>
              <s>var</s><s>false</s><s>String</s><p>指定将当前迭代到的元素保存到<s>page</s>这个<s>Web</s>域中<br>的属性名称</p>
              <s class="tight">varstatus</s><s class="tight">false</s><s class="tight2">String</s><p>记住用于保存迭代信息的对象</p>
              <s>items</s><s>true</s><p>任何支持的类型</p><p>将要迭代的集合对象</p>
              <s>begin</s><s>true</s><s>int</s><p>如果指定<s>items</s>属性，就从集合中的第<s>begin</s>个元<br>素开始进行迭代，<s>begin</s>的索引值从<s>0</s>开始编号；<br>如果没有指定<s>items</s>属性，就从<s>begin</s>指定的值开<br>始迭代，直到<s>end</s>值时结束迭代</p>
              <s>end</s><s>true</s><s>int</s><p>参看<s>begin</s>属性的描述</p>
              <s><mark>step</mark></s><s>true</s><s>int</s><p>指定迭代的步长，即迭代因子的迭代增量</p>
            </div>
            <svg class="tlines" viewBox="0 0 874 381">
              <path d="M9.500 10h853v358.500h-853zM9.500 43h853M9.500 117h853M9.500 151h853M9.500 185h853M9.500 293h853M9.500 336h853M129 10v358M246 10v358M415.500 10v358" fill="none" stroke="#1c1c1e" stroke-width="1.400"/>
              <path d="M854 39l8 4-8 4zM854 113l8 4-8 4zM854 181l8 4-8 4zM854 289l8 4-8 4zM854 332l8 4-8 4zM125 360h8l-4 8zM242 360h8l-4 8zM411.500 360h8l-4 8z" fill="#111"/>
              <g fill="#f2f2f2" stroke="#222" stroke-width="1.300"><circle cx="5" cy="5" r="4"/><circle cx="437" cy="5" r="4"/><circle cx="869" cy="5" r="4"/><circle cx="5" cy="190" r="4"/><circle cx="869" cy="190" r="4"/><circle cx="5" cy="376" r="4"/><circle cx="437" cy="376" r="4"/><circle cx="869" cy="376" r="4"/></g>
            </svg>
          </div>
          <footer class="sfoot">北京传智播客教育 <span>www.itcast.cn</span></footer>
        </article>
        <div class="vbar main"><i class="sb up"></i><i class="knob"></i><i class="sb down"></i>
          <svg class="dbl" viewBox="0 0 22 44"><path d="M5 14l6-6 6 6zM5 21l6-6 6 6zM5 28l6 6 6-6zM5 35l6 6 6-6z"/></svg></div>
      </div>
      <div class="strip"></div>
    </div>
  </section>

  <div class="bar draw">
    <i class="grip"></i>
    <span class="lbl dl">绘图<s>(<u>R</u>)</s></span><i class="dd"></i>
    <span class="ic on"><svg><use href="#ptr"/></svg></span><i class="sep"></i>
    <span class="lbl al">自选图形<s>(<u>U</u>)</s></span><i class="dd"></i>
    <span class="ic first"><svg><use href="#ln"/></svg></span><span class="ic"><svg><use href="#arw"/></svg></span><span class="ic"><svg><use href="#rect"/></svg></span><span class="ic"><svg><use href="#oval"/></svg></span><span class="ic"><svg><use href="#tbox"/></svg></span><span class="ic"><svg><use href="#vtbox"/></svg></span><span class="ic"><svg><use href="#wart"/></svg></span><span class="ic"><svg><use href="#diag"/></svg></span><span class="ic"><svg><use href="#clip"/></svg></span><span class="ic"><svg><use href="#pic"/></svg></span>
    <i class="sep"></i>
    <span class="ic"><svg><use href="#fill"/></svg></span><i class="dd w15"></i><span class="ic"><svg><use href="#pen"/></svg></span><i class="dd w15 off"></i><span class="ic"><svg><use href="#fcol"/></svg></span><i class="dd w15"></i>
    <span class="ic"><svg><use href="#lw"/></svg></span><span class="ic"><svg><use href="#dash"/></svg></span><span class="ic"><svg><use href="#arst"/></svg></span><span class="ic"><svg><use href="#shad"/></svg></span><span class="ic"><svg><use href="#threed"/></svg></span><i class="dd low"></i>
  </div>

  <div class="status">
    <span class="st1">幻灯片 <s>22 / 26</s></span><span class="st2"><s>1_Studio</s></span><span class="st3">英语<s>(</s>美国<s>)</s></span><svg class="bk"><use href="#book"/></svg>
    <div class="ime"><svg><use href="#sogou"/></svg><span>五</span>
      <svg viewBox="0 0 22 22"><path d="M13 2c3 6 0 12-9 13 4 6 14 4 15-3 .5-4-2-8-6-10z" fill="#4a7eb4"/></svg>
      <svg viewBox="0 0 22 22"><circle cx="7" cy="6" r="3" fill="none" stroke="#4a7eb4" stroke-width="1.500"/><path d="M15 13h3c1 4-1 6-3 7z" fill="#4a7eb4"/></svg>
      <svg viewBox="0 0 22 22"><rect x="0" y="3" width="22" height="16" fill="#4a7eb4"/><path d="M2 6.500h18M2 10h18M2 13.500h18" stroke="#e8eef4" stroke-width="2" stroke-dasharray="2.200 1"/><path d="M5 17h12" stroke="#e8eef4" stroke-width="1.500"/></svg>
      <svg viewBox="0 0 22 22"><circle cx="11" cy="6" r="4.500" fill="#a9a9a9"/><rect x="4" y="10" width="14" height="10" rx="4" fill="#a9a9a9"/></svg>
      <svg viewBox="0 0 22 22"><path d="M3 19l9-9" stroke="#4a7eb4" stroke-width="4.500"/><path d="M19 4.500l-3.500 3-3-2 1.500-4c-5 0-6 5-4 8s8 3 10-1z" fill="#4a7eb4"/></svg>
    </div>
  </div>

  <footer class="taskbar">
    <div class="start"><svg viewBox="0 0 26 26"><path d="M3 5c4-3 6-2 9 0l-1.500 8c-3-2-5-2-9 0z" fill="#e8542c"/><path d="M13.500 5.500c4 2 6 2 10 0L22 13.500c-4 2-6 2-10 0z" fill="#7cc440"/><path d="M1.500 14.500c4-3 6-2 9 0L9 22c-3-2-5-2-9 0z" fill="#4c84e8"/><path d="M11.500 15c4 2 6 2 10 0L20 23c-4 2-6 2-10 0z" fill="#f4c830"/></svg><em>开始</em></div>
    <div class="quick"><svg><use href="#ie"/></svg><svg><use href="#ue"/></svg><svg><use href="#note"/></svg><svg><use href="#cmd"/></svg><svg><use href="#mailq"/></svg><svg><use href="#key"/></svg></div>
    <span class="more">»</span>
    <div class="task cur"><svg><use href="#ppt"/></svg><s>Microsoft PowerP...</s></div>
    <div class="task hot"><svg><use href="#ecl"/></svg><s>MyEclipse Java E...</s></div>
    <div class="task"><svg><use href="#ie"/></svg>测试<s>jstl - Windo...</s></div>
    <div class="task"><svg><use href="#chm"/></svg><s class="jdk">JDK6API</s>中文参考<s>[...</s></div>
    <div class="band"><svg><use href="#sogou"/></svg>开发文档</div><span class="more m2">»</span>
    <div class="tray"><svg><use href="#key"/></svg><svg><use href="#person"/></svg><svg><use href="#netx"/></svg><svg><use href="#cloud"/></svg><svg><use href="#pcs"/></svg><svg><use href="#spk"/></svg><svg><use href="#safe"/></svg><svg><use href="#avira"/></svg><svg><use href="#msn"/></svg><s>16:34</s></div>
  </footer>
</main>
<svg class="cursor" viewBox="0 0 17 30"><path d="M1 1v23l5-4.500 4 9.500 4-2-4-9h6.500z" fill="#f6f6f6" stroke="#222" stroke-width="1.300"/></svg>
</body>
</html>
```
FILE: styles.css
```css
*, *::before { box-sizing: border-box; }
body { margin: 0; background: #0f1110; overflow: hidden; font-family: "Liberation Mono", "Noto Sans CJK SC", sans-serif; color: #111; }
.defs { position: absolute; }
s { text-decoration: none; font-family: "Liberation Mono", monospace; }
h1, h2, p { margin: 0; font-weight: normal; }
.app { width: 1728px; height: 1080px; margin-left: 96px; display: flex; flex-direction: column; background: #dbd8c9; font-family: "Noto Sans CJK SC", sans-serif; font-size: 15.7px; white-space: nowrap; }
.app > * { flex: none; }

.titlebar { height: 36px; display: flex; align-items: center; padding: 0 3px 2px 3px; background: linear-gradient(#4a96f0 0, #3a86ea 3px, #1a5cd2 5px, #1456cc 14px, #1a68e8 29px, #1a5ee0 33px, #2848a8 35px, #d8dcec 36px); color: #fff; }
.ticon { width: 22px; height: 24px; margin-right: 5px; }
.wintitle { font-size: 19px; line-height: 30px; font-weight: bold; text-shadow: 1px 1px 1px #123078; display: flex; align-items: baseline; margin-top: -3px; }
.wintitle span { font: bold 17.900px "Liberation Mono", monospace; }
.winbtns { margin-left: auto; display: flex; gap: 3px; }
.wb { width: 28px; height: 29px; border: 1px solid #dfe6f8; border-radius: 4px; background: linear-gradient(135deg, #6f97ee, #2c58d8 50%, #2450c8); }
.wb.close { background: linear-gradient(135deg, #ec9a80, #d4472c 50%, #c03a24); }

.grip { width: 4px; height: 20px; flex: none; background: repeating-linear-gradient(#b0ae9f 0 1px, #dedbcd 1px 3px); }
.menubar { height: 29px; display: flex; align-items: center; padding-left: 4px; }
.docicon { width: 24px; height: 24px; margin: 0 12px 0 3px; }
.menu { margin-right: 23.400px; line-height: 28px; }
.menu s, .lbl s { font-size: 13px; }
u { text-underline-offset: 2px; }
.ask { width: 241px; height: 23px; background: #ececec; color: #999; margin-left: auto; padding-left: 3px; line-height: 19px; font-size: 16.200px; font-weight: 300; display: flex; justify-content: space-between; }
.ask .dd { background-color: #dcdacb; width: 17px; height: 23px; }
.mx { width: 11px; height: 11px; margin: 0 8px 0 6px; }

.dd { width: 13px; height: 20px; display: grid; place-items: center; flex: none; }
.dd::before { content: ""; border: 4px solid transparent; border-top: 5px solid #111; border-bottom: 0; }
.dd.w14 { width: 14px; }
.dd.w15 { width: 15px; }
.dd.off::before { border-top-color: #aaa; }
.dd.low { padding-top: 16px; width: 16px; margin-left: 3px; }
.bar { display: flex; align-items: center; flex: none; }
.fmt { height: 36px; padding-left: 544px; }
.std { height: 35px; padding-left: 5px; }
.rec { height: 36px; padding-left: 5px; }
.draw { height: 33px; padding-left: 4px; }
.ic { width: 31px; height: 30px; display: grid; place-items: center; flex: none; }
.ic svg { width: 21px; height: 21px; }
.ic.big svg { width: 24px; height: 24px; margin-left: 2px; }
.ic.on { border: 1.500px solid #5b78c4; background: #cdd3dc; }
.sep { width: 8px; height: 29px; flex: none; background: linear-gradient(#b9b6a8, #b9b6a8) center / 1px 100% no-repeat; }
.sep.w7 { width: 7px; } .sep.w9 { width: 9px; } .sep.w10 { width: 10px; }
.combo { background: #ebebeb; height: 23px; display: flex; justify-content: space-between; flex: none; font: 15.500px/20px "Liberation Mono", monospace; letter-spacing: -1.200px; padding-left: 5px; }
.combo .dd { width: 16px; height: 23px; margin-left: auto; background-color: #dcdacb; }
.fontname { width: 191px; margin: 0 4px 0 4px; }
.fontsize { width: 61px; }
.zoom { width: 123px; margin-left: 2px; }
.ch { width: 31px; text-align: center; font: bold 19px/30px "Liberation Serif", serif; color: #5c5b54; flex: none; }
.it { font-style: italic; } .un { text-decoration: underline; } .sh { color: #a5a396; text-shadow: 1px 1px 0 #666; }
.design { width: 64px; margin-left: -1px; }
.ns { width: 26px; }
.fmt .dd.low { margin-left: 8px; }
.reclbl { width: 38px; }
.lbl { line-height: 28px; flex: none; }
.dl { margin-left: 6.500px; width: 57px; }
.draw .on { margin-left: 5px; }
.al { margin-left: 5px; width: 88.500px; }
.first { margin-left: 3.500px; }

.work { height: 805px; display: flex; }
.pane { width: 275px; display: flex; flex-direction: column; border-right: 6px solid #dfdccf; }
.tabs { height: 26px; display: grid; grid-template-columns: 85px 143px 41px; align-items: center; }
.tabshape { grid-area: 1 / 1 / 2 / 4; width: 269px; height: 26px; }
.tab { grid-area: 1 / 1; padding-left: 25px; line-height: 26px; }
.tab.act { grid-area: 1 / 2; padding-left: 4px; font-weight: 900; font-size: 17px; }
.px { grid-area: 1 / 3; width: 11px; height: 11px; margin-left: 22px; }
.listrow { height: 757px; display: flex; background: #eaeaea; }
.list { width: 248px; height: 757px; overflow: hidden; padding-top: 4px; display: flex; flex-direction: column; }
.item { height: 171.500px; display: flex; flex: none; align-items: flex-start; }
.no { width: 26px; padding: 11px 0 0 4px; font: bold 18px/24px "Liberation Mono", monospace; letter-spacing: -1px; height: 35px; }
.thumb { width: 204px; height: 154px; margin: 7px 0 0 7px; border: 1.500px solid #111; border-bottom-width: 2.500px; background: #ececec; flex: none; }
.sel .thumb { box-shadow: 0 0 0 3px #eaeaea, 0 0 0 7px #a6a497; }
.tt { font: italic 600 10px "Liberation Sans", "Noto Sans CJK SC", sans-serif; fill: #4f726b; }
.tb { font: 5px "Liberation Sans", "Noto Sans CJK SC", sans-serif; fill: #8e8e8e; }
.tc { font: 4px "Liberation Sans", "Noto Sans CJK SC", sans-serif; fill: #527f7b; }
.th { font: 900 5.500px "Liberation Serif", "Noto Sans CJK SC", sans-serif; fill: #111; }
.dot { fill: #555; }
.vbar { width: 21px; display: flex; flex-direction: column; background: #e6e5df; }
.sb, .knob { display: grid; place-items: center; width: 100%; height: 21px; background: #dfdccf; border-right: 1px solid #99968a; border-bottom: 2px solid #99968a; border-top: 1px solid #f4f3ec; }
.sb::before { content: ""; border: 5px solid transparent; }
.up::before { border-bottom: 6px solid #111; border-top: 0; }
.down::before { border-top: 6px solid #111; border-bottom: 0; }
.left::before { border-right: 5px solid #aaa89b; border-left: 0; }
.right::before { border-left: 5px solid #aaa89b; border-right: 0; }
.vbar .knob { margin-top: 487px; height: 84px; }
.vbar .down { margin-top: auto; }
.views { height: 22px; display: flex; }
.v { width: 22px; height: 21px; }
.v.on { border: 1.500px solid #4c6cc0; background: #d4d9e0; }
.hbar { margin-left: 1px; width: 202px; display: flex; justify-content: space-between; background: #e6e4dd; }
.hbar .sb { width: 21px; height: 21px; }

.center { width: 1453px; display: flex; flex-direction: column; }
.stage { height: 796px; background: #a3a092; display: flex; justify-content: space-between; padding-left: 208px; border-left: 1px solid #bbb8aa; }
.strip { height: 7px; background: #e0ddcf; border-bottom: 1px solid #aaa798; }
.main { width: 22px; }
.main .sb, .main .knob { height: 21px; }
.main .knob { margin-top: 550px; height: 24px; }
.main .down { margin-top: auto; }
.dbl { width: 22px; height: 44px; margin-bottom: 20px; background: #dfdccf; border-bottom: 2px solid #6c6a60; }

.slide { position: relative; width: 1014px; height: 762px; margin-top: 17px; background: #eaeaeb; border: 1px solid #22201c; border-bottom: 3px solid #9a9a98; box-shadow: 5px 7px 0 #100f0d; }
.slide::before { content: ""; position: absolute; left: 19px; top: 20px; width: 979px; height: 681px; border: 3px solid #4f776f; border-radius: 74px; }
.banner { display: block; width: 850px; height: 75px; margin: 39px 0 0 94px; }
.stitle { height: 88px; margin-left: 94px; display: flex; align-items: flex-start; padding-top: 22px; color: #416d65; line-height: 54px; }
.tip, .tag { font: italic bold 46px/54px "Liberation Sans", Arial, sans-serif; -webkit-text-stroke: 1.600px #416d65; }
.tip { width: 82px; letter-spacing: 1px; }
.tag { letter-spacing: 3.100px; width: 302px; }
.col { width: 52px; margin-left: -12px; padding-left: 4px; font-size: 32px; line-height: 62px; font-style: italic; font-weight: 900; }
.cn { font-size: 46px; font-style: italic; font-weight: 300; line-height: 50px; margin-left: -5px; }
.rule { height: 5px; width: 853px; margin: 0 0 0 83px; border: 0; background: #436d65; }
.lead { height: 84px; padding-top: 15px; margin-left: 133px; font-size: 28.100px; line-height: 27px; font-weight: 350; }
.lead span { font: 27.500px/20px "Liberation Sans", Arial, sans-serif; display: inline-block; width: 149px; }
.lead::before { content: ""; position: absolute; left: 96px; top: 234px; width: 13px; height: 13px; border-radius: 50%; background: #111; }
.tframe { position: relative; width: 874px; height: 381px; margin-left: 90px; padding: 10px 11px 12px 9px; background: repeating-linear-gradient(125deg, #505050 0 1.200px, #eaeaeb 1.400px 4.800px); }
.tlines { position: absolute; left: 0; top: 0; width: 874px; height: 381px; }
.tgrid { width: 854px; height: 359px; background: #eaeaeb; display: grid; grid-template-columns: 120px 117px 169.500px 1fr; grid-template-rows: 33px 74px 34px 34px 108px 43px 33px; align-items: center; font-size: 19.600px; line-height: 23.500px; font-weight: 300; }
.tgrid > * { padding-left: 10px; }
.tgrid > b { font-size: 14px; font-weight: 900; text-align: center; padding: 0 5px 3px 0; }
.tgrid > b s { font-family: "Liberation Serif", serif; font-size: 12.500px; font-weight: bold; letter-spacing: -1px; line-height: 0; }
.tgrid > b.sp { font-size: 14.500px; letter-spacing: 1.500px; padding-right: 2px; }
.tgrid s { font-size: 16.400px; font-weight: normal; }
.tgrid p s { line-height: 0; }
.tgrid > s { padding-top: 3px; }
.tgrid .tight { letter-spacing: -2px; }
.tgrid .tight2 { letter-spacing: -1.600px; }
mark { background: #111; color: #eee; padding: 2px 10px 2px 0; }
.sfoot { margin: 37px 0 0 387px; font-size: 20px; line-height: 32px; font-weight: 300; }
.sfoot span { font: 20px "Liberation Sans", Arial, sans-serif; margin-left: -1px; }

.status { height: 30px; display: flex; line-height: 31px; }
.status s { font-size: 13.500px; }
.st1 { width: 363px; padding-left: 112px; }
.st1 s { letter-spacing: .2px; }
.st2 { width: 282px; padding-left: 112px; }
.st3 { width: 286px; padding-left: 112px; }
.bk { width: 28px; height: 19px; margin: 4px 0 0 0; }
.ime { margin-left: auto; width: 194px; height: 30px; background: #e6e9ee; border: 1.500px solid #9ab0cc; display: flex; align-items: center; justify-content: space-between; padding: 0 4px; color: #4a7eb4; font-size: 20px; font-weight: 500; line-height: 28px; }
.ime svg { width: 22px; height: 22px; }

.taskbar { height: 40px; display: flex; align-items: stretch; background: linear-gradient(#3f7ce6 0, #4a86ea 3px, #3562d0 8px, #3560d0 32px, #2848a8 40px); color: #e8eefc; font-size: 16.200px; font-weight: 300; }
.taskbar s { font-size: 13.600px; }
.taskbar .jdk { letter-spacing: -.6px; }
.start { width: 130px; border-radius: 0 12px 14px 0; background: linear-gradient(#70a870 0, #48a048 5px, #389038 20px, #3c9c3c 32px, #2c742c 40px); display: flex; align-items: center; padding-left: 13px; gap: 11px; box-shadow: inset -4px 0 6px #2a702a; }
.start svg { width: 26px; height: 28px; }
.start em { font-size: 25px; font-weight: 300; color: #fff; text-shadow: 1px 1px 1px #243; line-height: 34px; margin-top: -4px; }
.quick { display: flex; align-items: center; gap: 9.200px; padding-left: 17px; width: 224px; }
.quick svg { width: 22px; height: 22px; }
.more { width: 29px; line-height: 24px; font-size: 18px; color: #c8d8f8; padding-left: 9px; font-weight: 500; }
.task { width: 213px; margin: 4px 3.500px 4px 0; padding-left: 13px; border-radius: 3px; background: linear-gradient(#5e92f0, #4478e0 20%, #4074de 85%, #3060c8); display: flex; align-items: center; line-height: 32px; flex: none; }
.task svg { width: 22px; height: 22px; margin-right: 5px; flex: none; }
.task.cur { background: linear-gradient(#2146a0, #2850b4 20%, #2850b4); margin-right: 4px; }
.task.hot { background: linear-gradient(#7cb0f8, #5e98f2 20%, #5a92ee); }
.band { margin-left: 43px; display: flex; align-items: center; color: #a9c4f4; }
.band svg { width: 20px; height: 22px; margin-right: 11px; }
.m2 { padding-left: 12px; width: 32px; }
.tray { margin-left: auto; width: 297px; background: linear-gradient(#48b4f0 0, #2a94e0 5px, #2488d8 30px, #1c68b8 40px); border-left: 1px solid #1c54b0; display: flex; align-items: center; padding-left: 12px; gap: 2.600px; box-shadow: inset 2px 0 2px #50c0f4; }
.tray svg { width: 22px; height: 23px; flex: none; }
.tray s { margin-left: 5px; }
.cursor { position: absolute; left: 724px; top: 1045px; width: 17px; height: 30px; }
```
